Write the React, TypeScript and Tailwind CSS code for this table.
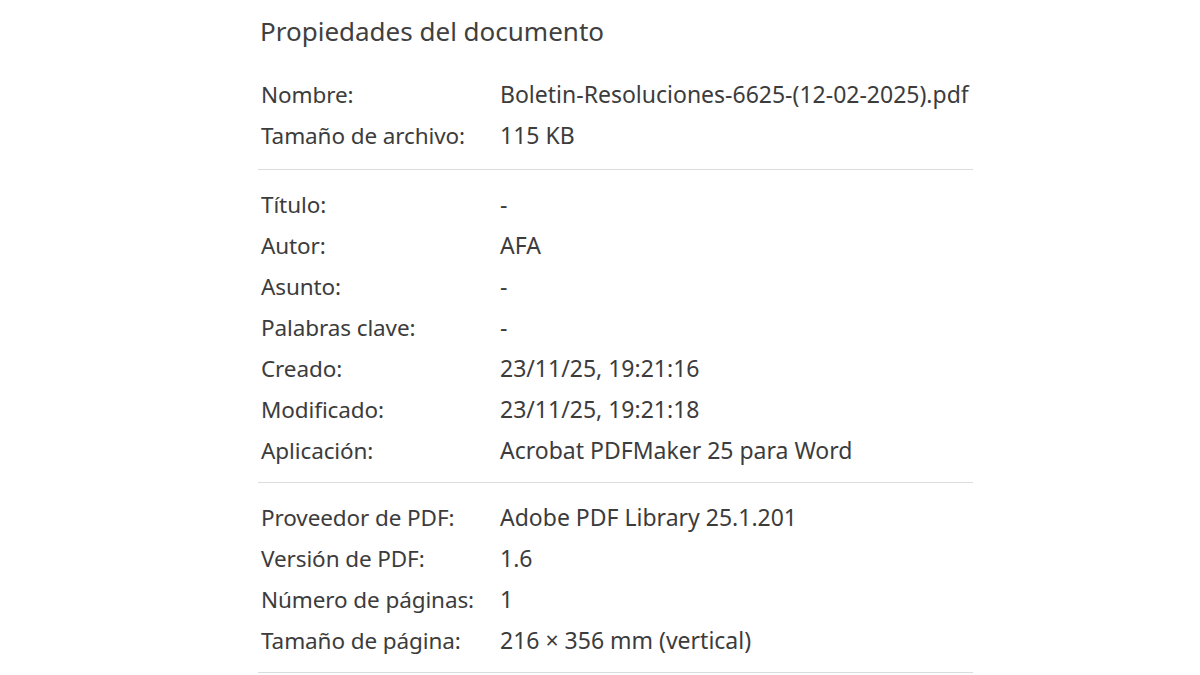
const secciones: [string, string][][] = [
  [
    ["Nombre:", "Boletin-Resoluciones-6625-(12-02-2025).pdf"],
    ["Tamaño de archivo:", "115 KB"],
  ],
  [
    ["Título:", "-"],
    ["Autor:", "AFA"],
    ["Asunto:", "-"],
    ["Palabras clave:", "-"],
    ["Creado:", "23/11/25, 19:21:16"],
    ["Modificado:", "23/11/25, 19:21:18"],
    ["Aplicación:", "Acrobat PDFMaker 25 para Word"],
  ],
  [
    ["Proveedor de PDF:", "Adobe PDF Library 25.1.201"],
    ["Versión de PDF:", "1.6"],
    ["Número de páginas:", "1"],
    ["Tamaño de página:", "216 × 356 mm (vertical)"],
  ],
];

export default function App() {
  return (
    <div
      className="w-[1200px] h-[675px] overflow-hidden bg-white text-[#3c3c3c]"
      style={{ fontFamily: '"Noto Sans", "Open Sans", sans-serif' }}
    >
      <div className="ml-[258px] w-[715px] pt-[13px]">
        <h1 className="h-[36px] flex items-center pl-[2px] text-[26px] font-normal text-[#404040]">
          Propiedades del documento
        </h1>
        {secciones.map((filas, i) => (
          <div
            key={i}
            className={
              i === 0
                ? "pt-[25px] pb-[13px] border-b border-[#dcdcdc]"
                : "pt-[14px] pb-[11px] border-b border-[#dcdcdc]"
            }
          >
            {filas.map(([label, valor]) => (
              <div key={label} className="h-[41px] flex items-center">
                <div className="w-[242px] pl-[3px] shrink-0 text-[22.5px] tracking-[-0.1px]">{label}</div>
                <div className="whitespace-nowrap text-[23px]">{valor}</div>
              </div>
            ))}
          </div>
        ))}
      </div>
    </div>
  );
}
